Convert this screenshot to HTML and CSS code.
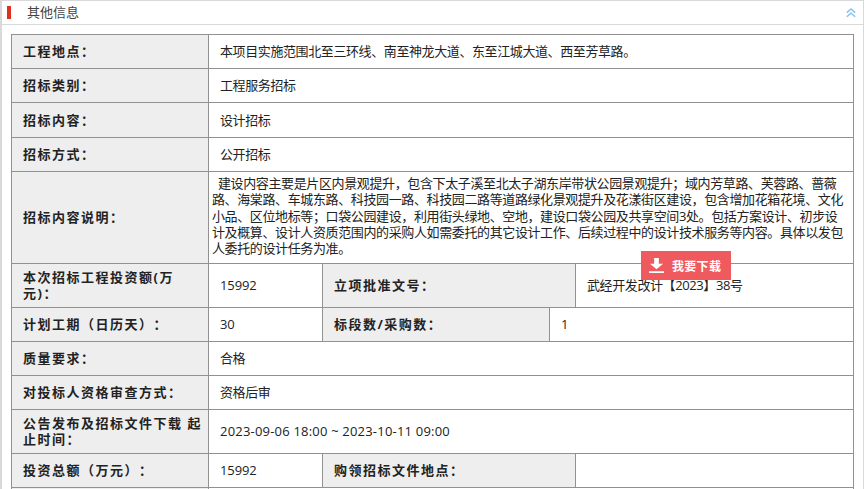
FILE: index.html
```html
<!DOCTYPE html>
<html lang="zh-CN">
<head>
<meta charset="utf-8">
<title>其他信息</title>
<link rel="stylesheet" href="styles.css">
</head>
<body>
<section class="panel">
  <header class="panel-head">
    <span class="mark"></span>
    <h2 class="panel-title">其他信息</h2>
    <svg class="collapse" width="10" height="10" viewBox="0 0 10 10" aria-hidden="true"><path d="M.8 4.600 5 1l4.200 3.600M.8 8.800 5 5.200l4.200 3.600" fill="none" stroke="#86c4f2" stroke-width="1.500"/></svg>
  </header>
  <div class="sheet">
    <div class="row"><div class="label">工程地点：</div><div class="value grow">本项目实施范围北至三环线、南至神龙大道、东至江城大道、西至芳草路。</div></div>
    <div class="row"><div class="label">招标类别：</div><div class="value grow">工程服务招标</div></div>
    <div class="row tall"><div class="label">招标内容：</div><div class="value grow">设计招标</div></div>
    <div class="row"><div class="label">招标方式：</div><div class="value grow">公开招标</div></div>
    <div class="row desc"><div class="label">招标内容说明：</div><div class="value grow text">&nbsp;&nbsp;建设内容主要是片区内景观提升，包含下太子溪至北太子湖东岸带状公园景观提升；域内芳草路、芙蓉路、蔷薇路、海棠路、车城东路、科技园一路、科技园二路等道路绿化景观提升及花漾街区建设，包含增加花箱花境、文化小品、区位地标等；口袋公园建设，利用街头绿地、空地，建设口袋公园及共享空间3处。包括方案设计、初步设计及概算、设计人资质范围内的采购人如需委托的其它设计工作、后续过程中的设计技术服务等内容。具体以发包人委托的设计任务为准。</div></div>
    <div class="row double"><div class="label">本次招标工程投资额(万元)：</div><div class="value short num">15992</div><div class="label wide">立项批准文号：</div><div class="value grow">武经开发改计【2023】38号</div></div>
    <div class="row"><div class="label">计划工期（日历天）：</div><div class="value short num">30</div><div class="label narrow">标段数/采购数：</div><div class="value grow num">1</div></div>
    <div class="row"><div class="label">质量要求：</div><div class="value grow">合格</div></div>
    <div class="row"><div class="label">对投标人资格审查方式：</div><div class="value grow">资格后审</div></div>
    <div class="row double"><div class="label">公告发布及招标文件下载 起止时间：</div><div class="value grow num date">2023-09-06 18:00 ~ 2023-10-11 09:00</div></div>
    <div class="row"><div class="label">投资总额（万元）：</div><div class="value short num">15992</div><div class="label wide">购领招标文件地点：</div><div class="value grow"></div></div>
    <div class="row"><div class="label"></div><div class="value grow"></div></div>
  </div>
  <a class="download" href="#">
    <svg width="15" height="15" viewBox="0 0 16 16" aria-hidden="true"><path d="M5.500 0h5v6H15l-7 6-7-6h4.500zM0 14h16v2H0z" fill="#fff"/></svg>
    <span>我要下载</span>
  </a>
</section>
</body>
</html>
```
FILE: styles.css
```css
html, body {
  margin: 0;
  height: 489px;
  overflow: hidden;
  background: #fff;
}
body {
  font-family: "Open Sans", "Noto Sans CJK SC", sans-serif;
  font-size: 13px;
  color: #222;
  text-spacing-trim: space-all;
}
.panel {
  position: relative;
  width: 861px;
  height: 488px;
  overflow: hidden;
  border: solid #d9d9d9;
  border-width: 1px 1px 0 2px;
}
.panel-head {
  display: flex;
  align-items: center;
  height: 23px;
  border-bottom: 1px solid #d9d9d9;
  padding: 0 7px 0 5px;
}
.mark {
  width: 4px;
  height: 13px;
  background: #e0301e;
  margin-right: 16px;
}
.panel-title {
  flex: 1;
  margin: 0 0 2px;
  font-size: 13px;
  font-weight: 400;
  line-height: 16px;
  color: #444;
}
.collapse {
  display: block;
}
.sheet {
  width: 841px;
  margin: 9px 0 0 9px;
  border: 1px solid #919191;
  border-bottom: 0;
}
.row {
  display: flex;
  min-height: 33px;
  border-bottom: 1px solid #919191;
}
.row.tall { min-height: 34px; }
.row.desc { min-height: 91px; }
.row.double { min-height: 43px; }
.label, .value {
  display: flex;
  align-items: center;
  box-sizing: border-box;
  line-height: 16px;
  padding-bottom: 1px;
}
.label {
  width: 197px;
  flex: none;
  padding-left: 11px;
  padding-right: 5px;
  background: #eee;
  border-right: 1px solid #919191;
  font-weight: 700;
  letter-spacing: 1.5px;
}
.label.wide { width: 253px; }
.label.narrow { width: 227px; }
.value {
  padding-left: 11px;
  padding-right: 10px;
  letter-spacing: -0.4px;
}
.value.num {
  letter-spacing: -0.1px;
}
.value.date {
  letter-spacing: 0.2px;
}
.value.short {
  width: 114px;
  flex: none;
  border-right: 1px solid #919191;
}
.value.grow {
  flex: 1;
  min-width: 0;
}
.value.text {
  display: block;
  padding: 3px 9px 0 3px;
  line-height: 16.25px;
  letter-spacing: -0.38px;
}
.download {
  position: absolute;
  left: 639px;
  top: 250px;
  display: flex;
  align-items: center;
  gap: 8px;
  box-sizing: border-box;
  width: 90px;
  height: 29px;
  padding-left: 8px;
  background: #ef5a5e;
  color: #fff;
  font-size: 12px;
  font-weight: 700;
  letter-spacing: 0.3px;
  text-decoration: none;
}
```
